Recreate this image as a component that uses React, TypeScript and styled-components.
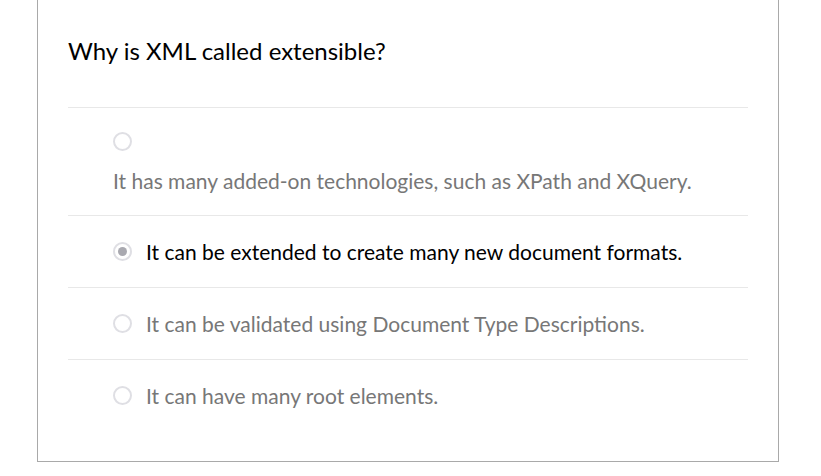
import React from "react";
import styled, { createGlobalStyle } from "styled-components";

const Global = createGlobalStyle`
  html, body { margin: 0; padding: 0; background: #fff; }
  body { font-family: Lato, "Open Sans", sans-serif; }
`;

const Card = styled.section`
  box-sizing: border-box;
  width: 742px;
  margin: 0 0 0 37px;
  border: 1px solid #a9a9a9;
  border-top: none;
  padding: 34px 30px 30px;
  background: #fff;
`;

const Title = styled.h2`
  margin: 0 0 39px;
  font-size: 24px;
  line-height: 34px;
  font-weight: 400;
  color: #000;
`;

const List = styled.div`
  display: flex;
  flex-direction: column;
`;

const Row = styled.label<{ $stacked?: boolean }>`
  display: flex;
  flex-direction: ${(p) => (p.$stacked ? "column" : "row")};
  align-items: ${(p) => (p.$stacked ? "flex-start" : "center")};
  gap: ${(p) => (p.$stacked ? "17px" : "14px")};
  border-top: 1px solid #e8e8e8;
  padding: ${(p) => (p.$stacked ? "24px 45px 22px" : "23px 45px")};
`;

const Radio = styled.span<{ $checked?: boolean }>`
  box-sizing: border-box;
  flex: none;
  width: 19px;
  height: 19px;
  border-radius: 50%;
  border: 2px solid #dfdfe4;
  background: #fff;
  display: flex;
  align-items: center;
  justify-content: center;
  &::after {
    content: "";
    display: ${(p) => (p.$checked ? "block" : "none")};
    width: 9px;
    height: 9px;
    border-radius: 50%;
    background: #a9a9b0;
  }
`;

const Text = styled.span<{ $active?: boolean }>`
  font-size: 21px;
  line-height: 25px;
  color: ${(p) => (p.$active ? "#000" : "#777")};
`;

const options = [
  { text: "It has many added-on technologies, such as XPath and XQuery.", stacked: true },
  { text: "It can be extended to create many new document formats.", checked: true },
  { text: "It can be validated using Document Type Descriptions." },
  { text: "It can have many root elements." },
];

export default function App() {
  return (
    <>
      <Global />
      <Card>
        <Title>Why is XML called extensible?</Title>
        <List>
          {options.map((o) => (
            <Row key={o.text} $stacked={o.stacked}>
              <Radio $checked={o.checked} />
              <Text $active={o.checked}>{o.text}</Text>
            </Row>
          ))}
        </List>
      </Card>
    </>
  );
}
